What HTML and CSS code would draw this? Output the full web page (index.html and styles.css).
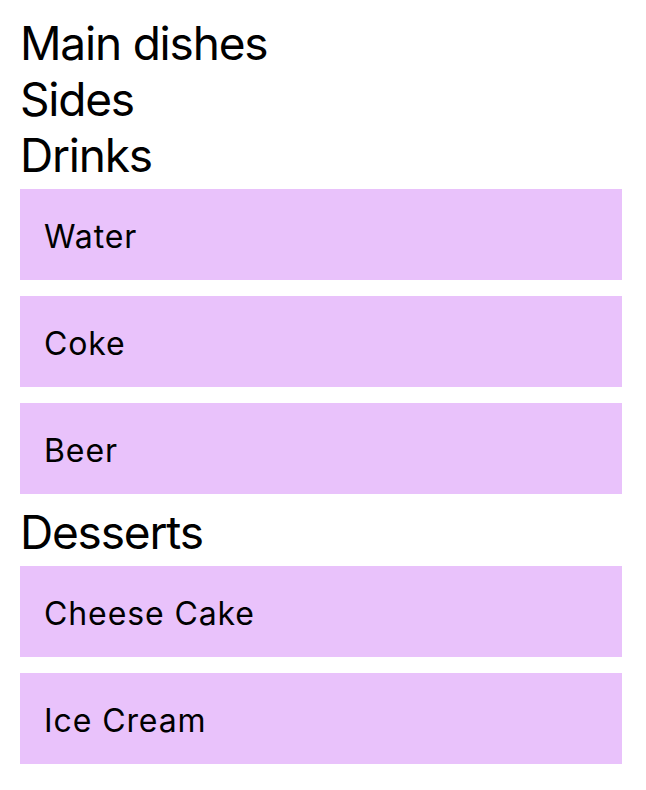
FILE: index.html
```html
<!DOCTYPE html>
<html>
<head>
<meta charset="utf-8">
<link rel="stylesheet" href="styles.css">
</head>
<body>
<div class="menu">
  <div class="heading">Main dishes</div>
  <div class="heading">Sides</div>
  <div class="heading">Drinks</div>
  <div class="item">Water</div>
  <div class="item">Coke</div>
  <div class="item">Beer</div>
  <div class="heading">Desserts</div>
  <div class="item">Cheese Cake</div>
  <div class="item">Ice Cream</div>
</div>
</body>
</html>
```
FILE: styles.css
```css
html, body {
  margin: 0;
  padding: 0;
  background: #ffffff;
}
body {
  font-family: Inter, "Liberation Sans", sans-serif;
  color: #000000;
}
.menu {
  display: flex;
  flex-direction: column;
  padding: 15px 24px 0 20px;
}
.heading {
  font-size: 46px;
  line-height: 56px;
  height: 56px;
  letter-spacing: -1.2px;
  white-space: nowrap;
}
.item {
  background: #e9c2fb;
  height: 91px;
  box-sizing: border-box;
  display: flex;
  align-items: center;
  padding: 4px 24px 0 24px;
  font-size: 32px;
  letter-spacing: 0.9px;
  margin: 6px 0 10px 0;
}
```
